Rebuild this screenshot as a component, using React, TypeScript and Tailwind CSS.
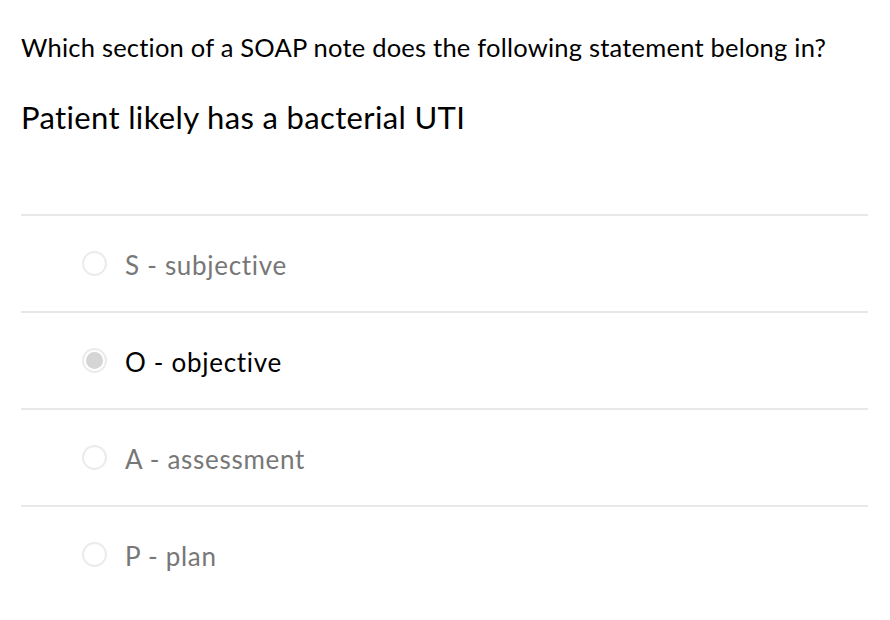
import React from "react";

const options = [
  { label: "S - subjective", selected: false },
  { label: "O - objective", selected: true },
  { label: "A - assessment", selected: false },
  { label: "P - plan", selected: false },
];

export default function App() {
  return (
    <div
      className="w-[890px] h-[620px] bg-white px-[21px] pt-[32px]"
      style={{ fontFamily: "Lato, 'Open Sans', sans-serif" }}
    >
      <div className="text-[25.5px] leading-[30px] tracking-[0.22px] text-black whitespace-nowrap">
        Which section of a SOAP note does the following statement belong in?
      </div>
      <div className="mt-[35px] text-[31px] leading-[40px] tracking-[0.35px] text-black">
        Patient likely has a bacterial UTI
      </div>
      <div className="mt-[77px] w-[847px]">
        {options.map((o) => (
          <div
            key={o.label}
            className="h-[97px] border-t-2 border-[#e8e8e8] flex items-center pl-[61px]"
          >
            <div className="w-[25px] h-[25px] rounded-full border-2 border-[#ebebeb] bg-white flex items-center justify-center shrink-0">
              {o.selected && (
                <div className="w-[17px] h-[17px] rounded-full bg-[#d5d5d5]" />
              )}
            </div>
            <span
              className={`ml-[18px] text-[26px] leading-[30px] tracking-[0.7px] mt-[2px] ${
                o.selected ? "text-black" : "text-[#777777]"
              }`}
            >
              {o.label}
            </span>
          </div>
        ))}
      </div>
    </div>
  );
}
